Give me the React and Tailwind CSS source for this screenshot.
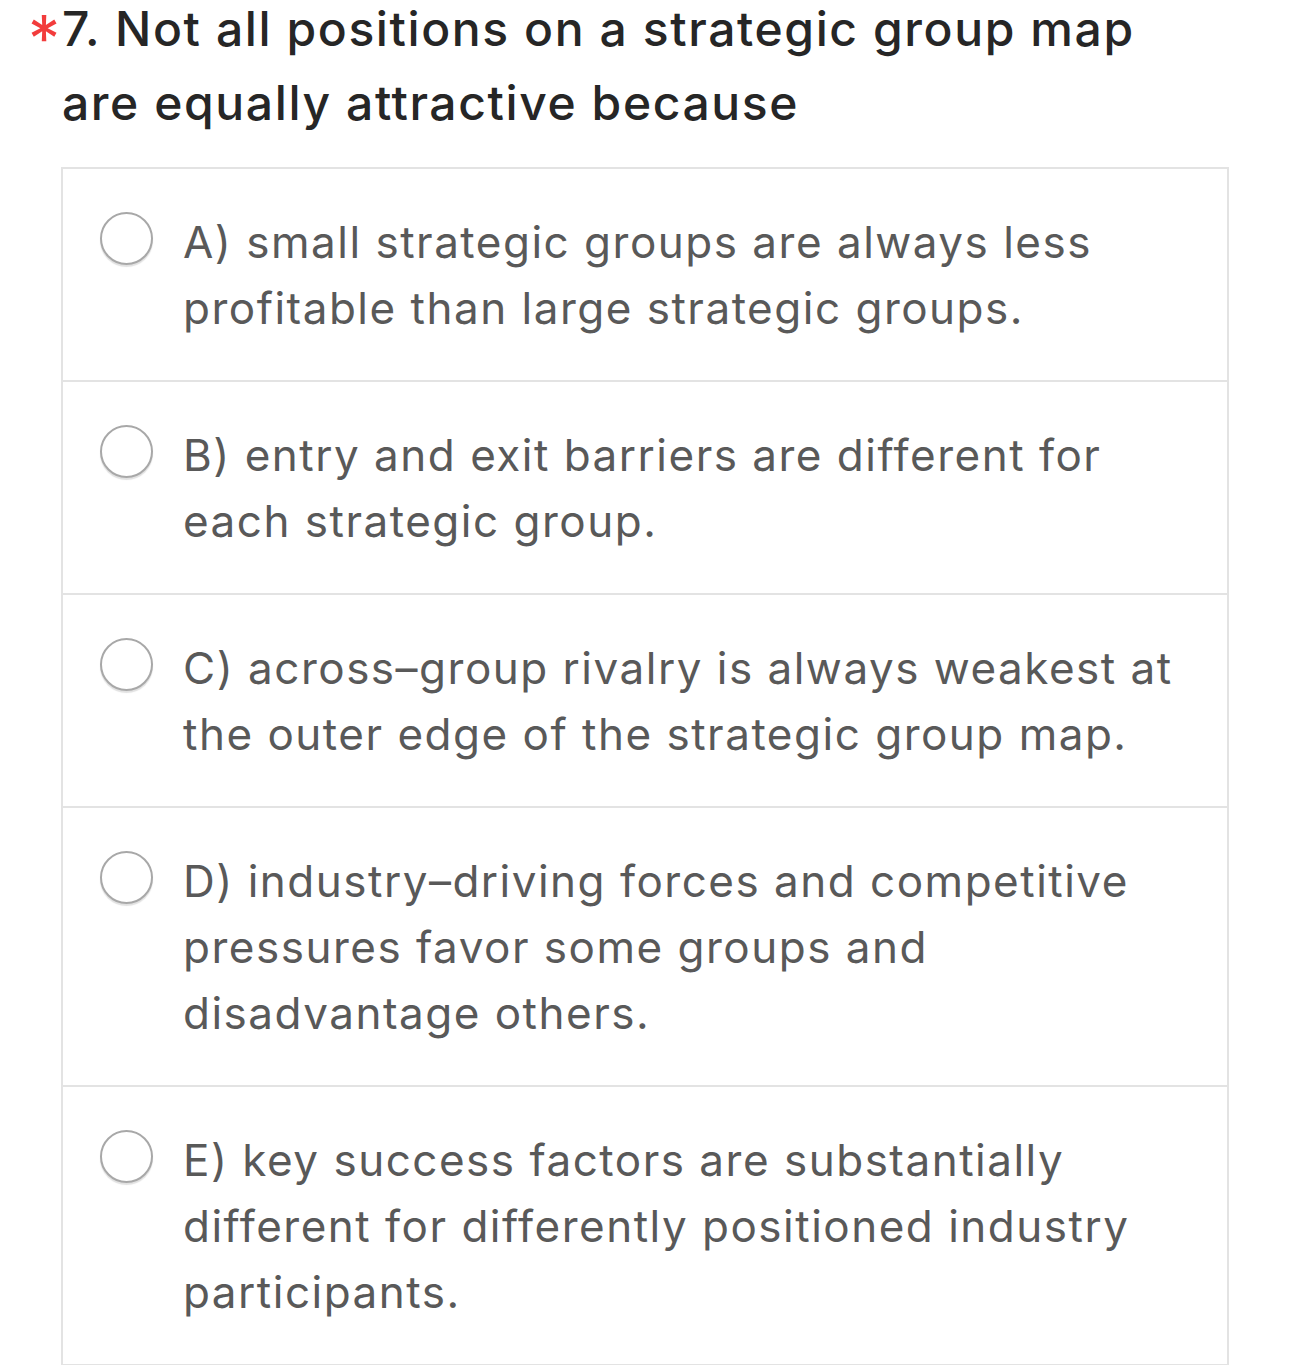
const OPTIONS = [
  { id: "A", lines: ["A) small strategic groups are always less", "profitable than large strategic groups."] },
  { id: "B", lines: ["B) entry and exit barriers are different for", "each strategic group."] },
  { id: "C", lines: ["C) across–group rivalry is always weakest at", "the outer edge of the strategic group map."] },
  { id: "D", lines: ["D) industry–driving forces and competitive", "pressures favor some groups and", "disadvantage others."] },
  { id: "E", lines: ["E) key success factors are substantially", "different for differently positioned industry", "participants."] },
];

function Radio() {
  return (
    <span className="mt-[3px] block h-[53px] w-[53px] shrink-0 rounded-full border-2 border-[#a8a8a8] bg-white shadow-[0_2px_1px_rgba(0,0,0,0.12)]" />
  );
}

export default function App() {
  return (
    <div className="min-h-[1365px] overflow-hidden bg-white font-['Inter',Arial,sans-serif]">
      {/* question title */}
      <div className="flex">
        <span className="block h-[58px] w-[62px] shrink-0 pl-[28px] text-[64px] leading-[78px] text-[#f23c3c]">*</span>
        <h2 className="flex flex-col gap-[16px] text-[48px] leading-[58px] font-medium tracking-[1.6px] text-[#262626]">
          <span className="whitespace-nowrap">7. Not all positions on a strategic group map</span>
          <span className="whitespace-nowrap">are equally attractive because</span>
        </h2>
      </div>

      {/* answers */}
      <div className="mt-[35px] ml-[61px] w-[1168px] border-2 border-[#e3e3e3]">
        {OPTIONS.map((o, i) => (
          <div key={o.id} className={i > 0 ? "flex border-t-2 border-[#e3e3e3] pt-[40px] pb-[39px] pl-[37px]" : "flex pt-[40px] pb-[39px] pl-[37px]"}>
            <Radio />
            <div className="ml-[30px] text-[44px] leading-[66px] tracking-[1.5px] text-[#595959]">
              {o.lines.map((l) => (
                <span key={l} className="block whitespace-nowrap">{l}</span>
              ))}
            </div>
          </div>
        ))}
      </div>
    </div>
  );
}
